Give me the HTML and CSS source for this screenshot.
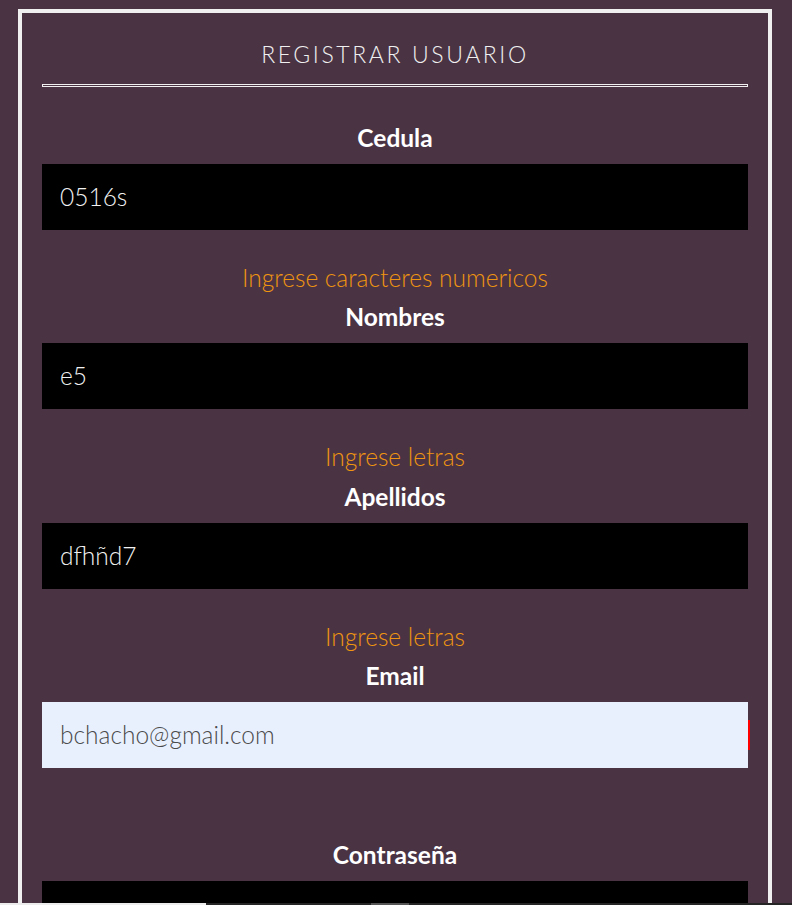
FILE: index.html
```html
<!DOCTYPE html>
<html lang="es">
<head>
<meta charset="utf-8">
<title>Registrar Usuario</title>
<link rel="stylesheet" href="styles.css">
</head>
<body>
<div class="panel">
  <h1 class="title">REGISTRAR USUARIO</h1>
  <div class="rule"></div>
  <form class="form">
    <div class="field">
      <div class="label">Cedula</div>
      <div class="input">0516s</div>
      <div class="error">Ingrese caracteres numericos</div>
    </div>
    <div class="field">
      <div class="label">Nombres</div>
      <div class="input">e5</div>
      <div class="error">Ingrese letras</div>
    </div>
    <div class="field">
      <div class="label">Apellidos</div>
      <div class="input">dfhñd7</div>
      <div class="error">Ingrese letras</div>
    </div>
    <div class="field">
      <div class="label">Email</div>
      <div class="input input-auto">bchacho@gmail.com</div>
      <div class="error"></div>
    </div>
    <div class="field">
      <div class="label">Contraseña</div>
      <div class="input"></div>
      <div class="error"></div>
    </div>
  </form>
</div>
<div class="bottombar"><span class="bb-light"></span><span class="bb-dark"></span><span class="bb-thumb"></span><span class="bb-dark2"></span></div>
</body>
</html>
```
FILE: styles.css
```css
html { overflow: hidden; }
body {
  margin: 0;
  background: #4a3444;
  font-family: Lato, "Open Sans", sans-serif;
}
.panel {
  margin: 9px 20px 0 18px;
  border: 4px solid #f0f0f0;
  border-bottom: none;
  padding: 0 20px 40px;
}
.title {
  margin: 0;
  padding-top: 27px;
  height: 44px;
  line-height: 28px;
  text-align: center;
  font-weight: 300;
  font-size: 23px;
  letter-spacing: 2.6px;
  color: #f0f0f0;
}
.rule {
  height: 1px;
  border: 1px solid #f0f0f0;
}
.form {
  padding-top: 38px;
  display: flex;
  flex-direction: column;
  gap: 13.3px;
}
.field {
  display: flex;
  flex-direction: column;
}
.label {
  text-align: center;
  font-weight: 700;
  font-size: 24.5px;
  line-height: 26px;
  color: #fff;
  margin-bottom: 13px;
}
.input {
  position: relative;
  height: 66px;
  box-sizing: border-box;
  background: #000;
  color: #f2f2f2;
  font-weight: 300;
  font-size: 24.5px;
  line-height: 66px;
  padding-left: 18px;
}
.input-auto {
  background: #e8f0fe;
  color: #4a4a4a;
}
.input-auto::after {
  content: "";
  position: absolute;
  right: -2px;
  top: 18px;
  width: 2px;
  height: 30px;
  background: #ff0000;
}
.error {
  margin-top: 35px;
  min-height: 26px;
  line-height: 26px;
  text-align: center;
  font-weight: 300;
  font-size: 24.5px;
  color: #f09510;
}
.bottombar {
  position: fixed;
  left: 0;
  right: 0;
  bottom: 0;
  height: 2px;
  display: flex;
}
.bb-light { width: 206px; background: #ececec; }
.bb-dark { width: 165px; background: #252525; }
.bb-thumb { width: 38px; background: #555; }
.bb-dark2 { flex: 1; background: #252525; }
```
